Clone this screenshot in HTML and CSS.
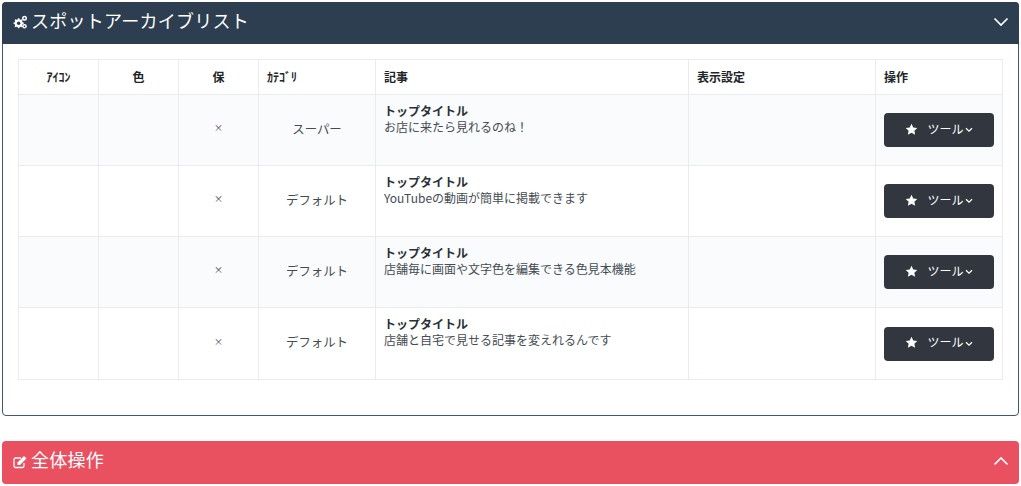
FILE: index.html
```html
<!DOCTYPE html>
<html lang="ja">
<head>
<meta charset="utf-8">
<title>スポットアーカイブリスト</title>
<link rel="stylesheet" href="styles.css">
</head>
<body>
<section class="card card-dark">
  <header class="card-head head-dark">
    <h2 class="card-title">
      <svg class="head-icon" viewBox="0 0 14 14" width="14" height="14"><g fill="#fff"><path d="M5 3.200h1.300l.4 1.200 1 .4 1.100-.6.900.9-.6 1.100.4 1 1.200.4v1.300l-1.200.4-.4 1 .6 1.100-.9.900-1.100-.6-1 .4-.4 1.200H5l-.4-1.200-1-.4-1.100.6-.9-.9.6-1.100-.4-1L.6 8.900V7.600l1.200-.4.4-1-.6-1.100.9-.9 1.100.6 1-.4z"/><circle cx="11.500" cy="3.300" r="2.500"/><circle cx="11.500" cy="11.300" r="2.300"/></g><circle cx="5.650" cy="8.250" r="1.700" fill="#2c3e50"/><circle cx="11.500" cy="3.300" r="1" fill="#2c3e50"/><circle cx="11.500" cy="11.300" r=".9" fill="#2c3e50"/></svg>
      <span class="title-text">スポットアーカイブリスト</span>
    </h2>
    <svg class="chevron" viewBox="0 0 16 10" width="16" height="10"><path d="M1.500 1.500L8 8l6.500-6.500" fill="none" stroke="#fff" stroke-width="1.700"/></svg>
  </header>
  <div class="card-body">
    <table class="spots">
      <colgroup><col class="c1"><col class="c1"><col class="c1"><col class="c2"><col class="c3"><col class="c4"><col class="c5"></colgroup>
      <thead>
        <tr><th class="center">ｱｲｺﾝ</th><th class="center">色</th><th class="center">保</th><th>ｶﾃｺﾞﾘ</th><th>記事</th><th>表示設定</th><th>操作</th></tr>
      </thead>
      <tbody>
        <tr>
          <td></td><td></td><td class="center keep"><span class="mark mark-purple">×</span></td><td class="center cat">スーパー</td>
          <td class="article"><strong>トップタイトル</strong><br>お店に来たら見れるのね！</td><td></td>
          <td class="ops"><button class="tool"><svg class="star" viewBox="0 0 14 14" width="13" height="13"><path fill="#fff" d="M7 .8l1.900 4 4.300.6-3.100 3 .8 4.300L7 10.600l-3.900 2.100.8-4.300-3.100-3 4.300-.6z"/></svg><span>ツール</span><svg class="caret" viewBox="0 0 8 6" width="8" height="6"><path d="M1 1.200l3 3 3-3" fill="none" stroke="#fff" stroke-width="1.300"/></svg></button></td>
        </tr>
        <tr>
          <td></td><td></td><td class="center keep"><span class="mark">×</span></td><td class="center cat">デフォルト</td>
          <td class="article"><strong>トップタイトル</strong><br>YouTubeの動画が簡単に掲載できます</td><td></td>
          <td class="ops"><button class="tool"><svg class="star" viewBox="0 0 14 14" width="13" height="13"><path fill="#fff" d="M7 .8l1.900 4 4.300.6-3.100 3 .8 4.300L7 10.600l-3.900 2.100.8-4.300-3.100-3 4.300-.6z"/></svg><span>ツール</span><svg class="caret" viewBox="0 0 8 6" width="8" height="6"><path d="M1 1.200l3 3 3-3" fill="none" stroke="#fff" stroke-width="1.300"/></svg></button></td>
        </tr>
        <tr>
          <td></td><td></td><td class="center keep"><span class="mark">×</span></td><td class="center cat">デフォルト</td>
          <td class="article"><strong>トップタイトル</strong><br>店舗毎に画面や文字色を編集できる色見本機能</td><td></td>
          <td class="ops"><button class="tool"><svg class="star" viewBox="0 0 14 14" width="13" height="13"><path fill="#fff" d="M7 .8l1.900 4 4.300.6-3.100 3 .8 4.300L7 10.600l-3.900 2.100.8-4.300-3.100-3 4.300-.6z"/></svg><span>ツール</span><svg class="caret" viewBox="0 0 8 6" width="8" height="6"><path d="M1 1.200l3 3 3-3" fill="none" stroke="#fff" stroke-width="1.300"/></svg></button></td>
        </tr>
        <tr>
          <td></td><td></td><td class="center keep"><span class="mark mark-purple">×</span></td><td class="center cat">デフォルト</td>
          <td class="article"><strong>トップタイトル</strong><br>店舗と自宅で見せる記事を変えれるんです</td><td></td>
          <td class="ops"><button class="tool"><svg class="star" viewBox="0 0 14 14" width="13" height="13"><path fill="#fff" d="M7 .8l1.900 4 4.300.6-3.100 3 .8 4.300L7 10.600l-3.900 2.100.8-4.300-3.100-3 4.300-.6z"/></svg><span>ツール</span><svg class="caret" viewBox="0 0 8 6" width="8" height="6"><path d="M1 1.200l3 3 3-3" fill="none" stroke="#fff" stroke-width="1.300"/></svg></button></td>
        </tr>
      </tbody>
    </table>
  </div>
</section>
<section class="card card-red">
  <header class="card-head head-red">
    <h2 class="card-title">
      <svg class="head-icon" viewBox="0 0 14 14" width="14" height="14"><path d="M11 8v3a1.500 1.500 0 0 1-1.500 1.500h-7A1.500 1.500 0 0 1 1 11V4.500A1.500 1.500 0 0 1 2.500 3H8" fill="none" stroke="#fff" stroke-width="1.300"/><path fill="#fff" d="M4.500 7.500L11 1l2.500 2.500L7 10H4.500z"/></svg>
      <span class="title-text">全体操作</span>
    </h2>
    <svg class="chevron chevron-up" viewBox="0 0 16 10" width="16" height="10"><path d="M1.500 8.500L8 2l6.500 6.500" fill="none" stroke="#fff" stroke-width="1.700"/></svg>
  </header>
</section>
</body>
</html>
```

FILE: styles.css
```css
* { box-sizing: border-box; }
html, body { margin: 0; padding: 0; background: #fff; }
body {
  padding: 2px 2px 0;
  font-family: "Noto Sans CJK JP", "Noto Sans", "Liberation Sans", sans-serif;
  font-size: 12px;
  line-height: 1.2;
  color: #333a42;
  overflow: hidden;
}
.card { border-radius: 4px; }
.card-dark {
  height: 414px;
  border: 1px solid #3e5871;
  margin-bottom: 25px;
}
.card-head {
  display: flex;
  align-items: center;
  justify-content: space-between;
  color: #fff;
  padding: 0 10px 2px 11px;
}
.head-dark { margin: -1px -1px 0; background: #2c3e50; border-radius: 4px 4px 0 0; height: 42px; }
.head-red { height: 43px; background: #e95060; border-radius: 4px; }
.card-title {
  margin: 0;
  display: flex;
  align-items: center;
  gap: 4px;
  font-size: 18px;
  font-weight: 400;
  line-height: 1;
}
.title-text { display: block; padding-bottom: 5px; letter-spacing: .25px; }
.head-icon { flex: none; }
.chevron { flex: none; }
.chevron-up { margin-bottom: 2px; }
.card-body { padding: 15px 15px 0; }
.spots {
  width: 984px;
  table-layout: fixed;
  border-collapse: collapse;
  border: 1px solid #e9ecef;
}
.c1 { width: 80px; }
.c2 { width: 117px; }
.c3 { width: 313px; }
.c4 { width: 187px; }
.c5 { width: 127px; }
.spots th, .spots td { border: 1px solid #e9ecef; padding: 8px; text-align: left; vertical-align: top; }
.spots th { height: 35px; font-size: 12px; font-weight: 700; line-height: 18px; color: #212529; vertical-align: middle; }
.spots tbody tr { height: 71px; }
.spots tbody tr:last-child { height: 72px; }
.spots tbody tr:nth-child(odd) { background: #fafbfd; }
.spots .center { text-align: center; }
.spots td.center { vertical-align: middle; padding-bottom: 10px; }
.spots td.keep { padding-bottom: 15px; }
.mark { font-size: 9px; color: #333; }
.mark-purple { color: #5e2a6a; }
.spots td.cat { font-size: 12.400px; font-weight: 400; color: #444b52; }
.article { line-height: 16px; color: #444b52; }
.article strong { font-weight: 700; font-size: 12px; color: #2a3036; }
.spots td.ops { vertical-align: middle; padding: 0 8px; }
.tool {
  display: flex;
  align-items: center;
  justify-content: center;
  width: 110px;
  height: 34px;
  padding: 0;
  border: 0;
  border-radius: 4px;
  background: #31363f;
  color: #fff;
  font: inherit;
  font-size: 12px;
}
.star { margin-bottom: 2px; }
.tool span { margin-left: 9px; padding-bottom: 2px; }
.tool .caret { margin-left: 1px; }
```
